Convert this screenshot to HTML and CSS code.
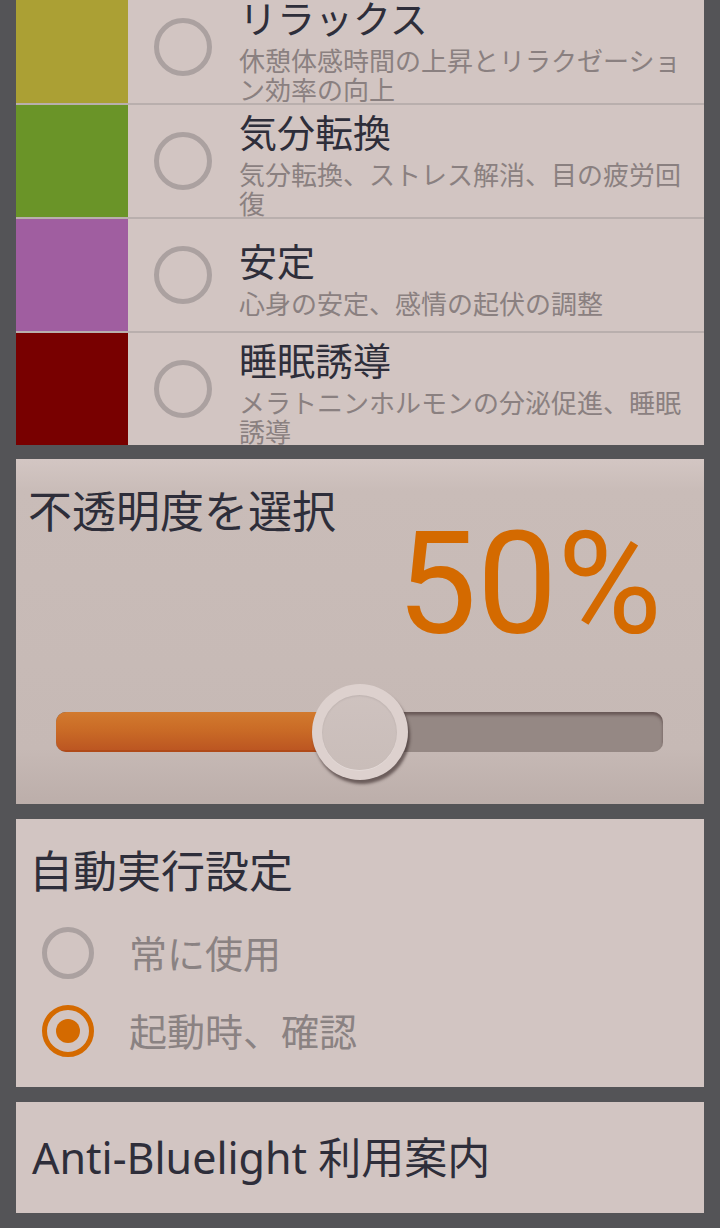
FILE: index.html
```html
<!DOCTYPE html>
<html lang="ja">
<head>
<meta charset="utf-8">
<title>Anti-Bluelight</title>
<link rel="stylesheet" href="styles.css">
</head>
<body>
<div class="screen">
  <section class="panel list">
    <div class="row">
      <div class="swatch sw-relax"></div>
      <div class="radio"></div>
      <div class="text">
        <div class="title">リラックス</div>
        <div class="desc">休憩体感時間の上昇とリラクゼーション効率の向上</div>
      </div>
    </div>
    <div class="row">
      <div class="swatch sw-mood"></div>
      <div class="radio"></div>
      <div class="text">
        <div class="title">気分転換</div>
        <div class="desc">気分転換、ストレス解消、目の疲労回復</div>
      </div>
    </div>
    <div class="row">
      <div class="swatch sw-stable"></div>
      <div class="radio"></div>
      <div class="text">
        <div class="title">安定</div>
        <div class="desc">心身の安定、感情の起伏の調整</div>
      </div>
    </div>
    <div class="row">
      <div class="swatch sw-sleep"></div>
      <div class="radio"></div>
      <div class="text">
        <div class="title">睡眠誘導</div>
        <div class="desc">メラトニンホルモンの分泌促進、睡眠誘導</div>
      </div>
    </div>
  </section>

  <section class="panel opacity">
    <div class="op-head">
      <div class="op-title">不透明度を選択</div>
      <div class="percent">50%</div>
    </div>
    <div class="slider">
      <div class="track"><div class="fill" style="width:50%"></div></div>
      <div class="thumb" style="left:50%"></div>
    </div>
  </section>

  <section class="panel auto">
    <div class="auto-title">自動実行設定</div>
    <div class="option">
      <div class="opt-radio"></div>
      <div class="opt-label">常に使用</div>
    </div>
    <div class="option">
      <div class="opt-radio checked"></div>
      <div class="opt-label">起動時、確認</div>
    </div>
  </section>

  <section class="panel guide">
    <div class="guide-text">Anti-Bluelight 利用案内</div>
  </section>
</div>
</body>
</html>
```
FILE: styles.css
```css
html, body {
  margin: 0;
  padding: 0;
  background: #545457;
}
body {
  font-family: "Noto Sans", "Noto Sans CJK JP", sans-serif;
  color: #2e2e3a;
  overflow: hidden;
}
.screen {
  width: 720px;
  height: 1228px;
  padding: 0 16px;
  box-sizing: border-box;
  overflow: hidden;
}
.panel {
  background: #d2c5c2;
}

/* ---- mode list ---- */
.list {
  margin-top: -9px;
}
.row {
  display: flex;
  align-items: center;
  height: 112px;
  overflow: hidden;
  border-bottom: 2px solid #b9afad;
}
.row:last-child {
  border-bottom: none;
}
.swatch {
  flex: none;
  width: 112px;
  align-self: stretch;
}
.sw-relax { background: #aba034; }
.sw-mood { background: #6a9428; }
.sw-stable { background: #a05ea0; }
.sw-sleep { background: #780000; }
.radio {
  flex: none;
  width: 58px;
  height: 58px;
  box-sizing: border-box;
  border: 5px solid #aba1a0;
  border-radius: 50%;
  margin-left: 26px;
}
.text {
  flex: none;
  width: 450px;
  margin-left: 27px;
}
.title {
  font-size: 38px;
  line-height: 58px;
  color: #2e2e3a;
}
.desc {
  font-size: 26px;
  line-height: 29px;
  color: #8a8080;
}

/* ---- opacity ---- */
.opacity {
  margin-top: 14px;
  height: 345px;
  box-sizing: border-box;
  padding: 26px 0 24px 12px;
  background: linear-gradient(180deg, #d3c6c3 0px, #c9bcb8 32px, #c6b9b5 290px, #bcaeaa 345px);
}
.op-head {
  display: flex;
  justify-content: space-between;
  align-items: flex-start;
  padding-right: 42px;
}
.op-title {
  font-size: 44px;
  line-height: 52px;
  color: #2e2e3a;
}
.percent {
  font-family: Roboto, "Liberation Sans", sans-serif;
  font-size: 143px;
  line-height: 143px;
  margin-top: 28px;
  color: #d46a00;
}
.slider {
  position: relative;
  display: flex;
  align-items: center;
  height: 96px;
  margin: 28px 41px 0 28px;
}
.track {
  width: 100%;
  height: 40px;
  border-radius: 10px;
  background: #958884;
  box-shadow: inset 0 3px 3px rgba(70, 50, 50, 0.55);
  overflow: hidden;
}
.fill {
  height: 100%;
  box-sizing: border-box;
  background: linear-gradient(180deg, #d27a2e 0%, #c96a26 50%, #bc5622 100%);
  border-bottom: 2px solid #b04a18;
}
.thumb {
  position: absolute;
  top: 0;
  width: 96px;
  height: 96px;
  margin-left: -48px;
  border-radius: 50%;
  background: #ddd1ce;
  box-shadow: 2px 4px 3px rgba(50, 35, 35, 0.6);
  display: flex;
  align-items: center;
  justify-content: center;
}
.thumb::after {
  content: "";
  width: 75px;
  height: 75px;
  border-radius: 50%;
  background: linear-gradient(180deg, #cec2bf 0%, #c9bdb9 100%);
  box-shadow: inset 0 1px 2px rgba(0, 0, 0, 0.08), 0 1px 0 rgba(255, 255, 255, 0.2);
}

/* ---- auto run ---- */
.auto {
  margin-top: 15px;
  height: 268px;
  box-sizing: border-box;
  padding: 26px 0 0 13px;
}
.auto-title {
  font-size: 44px;
  line-height: 52px;
  margin-bottom: 17px;
  color: #2e2e3a;
}
.option {
  display: flex;
  align-items: center;
  height: 78px;
  padding-left: 13px;
}
.opt-radio {
  flex: none;
  width: 52px;
  height: 52px;
  box-sizing: border-box;
  border: 5px solid #aba1a0;
  border-radius: 50%;
  display: flex;
  align-items: center;
  justify-content: center;
}
.opt-radio.checked {
  border-color: #d46a00;
}
.opt-radio.checked::after {
  content: "";
  width: 24px;
  height: 24px;
  border-radius: 50%;
  background: #d46a00;
}
.opt-label {
  margin-left: 35px;
  font-size: 38px;
  line-height: 52px;
  color: #8a8282;
}

/* ---- guide ---- */
.guide {
  margin-top: 15px;
  height: 111px;
  display: flex;
  align-items: center;
  padding-left: 16px;
}
.guide-text {
  font-size: 43px;
  line-height: 52px;
  color: #2e2e3a;
}
```
